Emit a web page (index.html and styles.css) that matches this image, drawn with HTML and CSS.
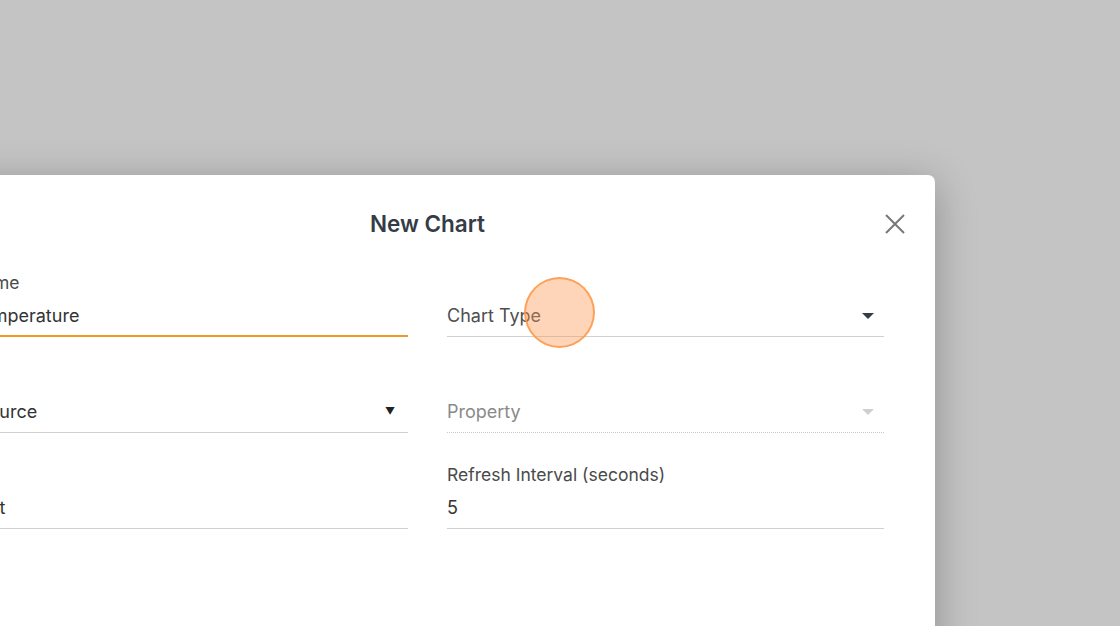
FILE: index.html
```html
<!DOCTYPE html>
<html lang="en">
<head>
<meta charset="utf-8">
<title>New Chart</title>
<link rel="stylesheet" href="styles.css">
</head>
<body>
<div class="dialog">
  <div class="header">
    <h2 class="title">New Chart</h2>
    <button class="close" aria-label="Close">
      <svg width="20" height="20" viewBox="0 0 20 20"><path d="M1 1 L19 19 M19 1 L1 19" stroke="#777" stroke-width="2" fill="none"/></svg>
    </button>
  </div>
  <div class="form">
    <div class="field">
      <label class="label">Name</label>
      <div class="input focused">Temperature</div>
    </div>
    <div class="field">
      <div class="input select placeholder">Chart Type
        <svg class="caret" width="12" height="6" viewBox="0 0 12 6"><path d="M0 0 H12 L6 6 Z" fill="#333d47"/></svg>
      </div>
    </div>
    <div class="field">
      <div class="input select native">Source
        <span class="native-arrow">▼</span>
      </div>
    </div>
    <div class="field">
      <div class="input select disabled">Property
        <svg class="caret" width="12" height="6" viewBox="0 0 12 6"><path d="M0 0 H12 L6 6 Z" fill="#cfcfcf"/></svg>
      </div>
    </div>
    <div class="field">
      <div class="input">Unit</div>
    </div>
    <div class="field">
      <label class="label">Refresh Interval (seconds)</label>
      <div class="input">5</div>
    </div>
  </div>
</div>
<div class="tap"></div>
</body>
</html>
```

FILE: styles.css
```css
html, body {
  margin: 0;
  padding: 0;
  height: 100%;
  overflow: hidden;
}
body {
  background: #c4c4c4;
  font-family: Inter, "Noto Sans", "Liberation Sans", sans-serif;
}
.dialog {
  position: relative;
  margin-top: 175px;
  margin-left: -80px;
  width: 1015px;
  height: 520px;
  background: #fff;
  border-radius: 7px;
  box-shadow: 0 8px 40px rgba(0, 0, 0, 0.28);
}
.header {
  position: relative;
  padding-top: 35px;
  display: flex;
  justify-content: center;
}
.title {
  margin: 0;
  font-size: 22.5px;
  line-height: 28px;
  font-weight: 600;
  color: #343c48;
}
.close {
  position: absolute;
  right: 30px;
  top: 39px;
  width: 20px;
  height: 20px;
  padding: 0;
  border: 0;
  background: none;
  display: flex;
}
.form {
  margin-top: 35px;
  padding: 0 51px;
  display: grid;
  grid-template-columns: 437px 437px;
  column-gap: 39px;
  row-gap: 32px;
}
.field {
  min-height: 64px;
  display: flex;
  flex-direction: column;
  justify-content: flex-end;
}
.label {
  font-size: 17.5px;
  line-height: 20px;
  color: #4a4a4a;
  margin-bottom: 7px;
}
.input {
  position: relative;
  font-size: 18px;
  line-height: 24px;
  padding: 4px 0 8px;
  color: #333;
  border-bottom: 1px solid #d0d0d0;
}
.input.focused {
  padding-bottom: 7px;
  border-bottom: 2px solid #f39a23;
}
.native {
  padding-left: 6px;
}
.placeholder {
  color: #4e4e4e;
}
.disabled {
  color: #8a8a8a;
  border-bottom: 1px dotted #c8c8c8;
}
.caret {
  position: absolute;
  right: 10px;
  top: 13px;
}
.native-arrow {
  position: absolute;
  right: 13px;
  top: 3px;
  font-size: 10px;
  color: #222;
}
.tap {
  position: absolute;
  left: 524px;
  top: 277px;
  width: 67px;
  height: 67px;
  border-radius: 50%;
  background: rgba(252, 150, 80, 0.4);
  border: 2.5px solid rgba(255, 150, 70, 0.85);
}
```
